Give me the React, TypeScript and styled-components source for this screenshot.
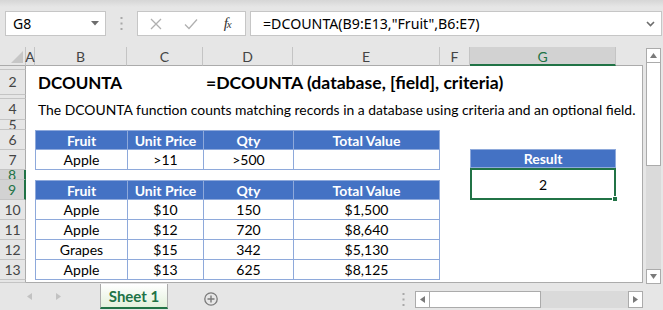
import styled, { createGlobalStyle } from "styled-components";

const Colors = {
  chrome: "#e6e6e6",
  chromeTop: "#d6d6d6",
  white: "#ffffff",
  boxLine: "#c6c6c6",
  hdrLine: "#c4c4c4",
  hdrLineDark: "#ababab",
  hdrText: "#444444",
  selHdr: "#d2d2d2",
  green: "#217346",
  blue: "#4472c4",
  blueLine: "#8ea9db",
  icon: "#7a7a7a",
  iconLight: "#b0b0b0",
  track: "#dadada",
};

const cellFont = `Lato, "Liberation Sans", sans-serif`;
const uiFont = `"Noto Sans", "Open Sans", sans-serif`;

const COLS = [26, 9, 92, 76, 90, 147, 30, 146, 27];
const ROWS = [19, 4, 25, 4, 21, 10, 20, 20, 10, 20, 20, 20, 20, 20, 3];
const LETTERS = ["", "A", "B", "C", "D", "E", "F", "G", ""];
const SELECTED_ROWS = [8, 9];

const criteria = [["Apple", ">11", ">500", ""]];
const records = [
  ["Apple", "$10", "150", "$1,500"],
  ["Apple", "$12", "720", "$8,640"],
  ["Grapes", "$15", "342", "$5,130"],
  ["Apple", "$13", "625", "$8,125"],
];
const heads = ["Fruit", "Unit Price", "Qty", "Total Value"];

const GlobalStyle = createGlobalStyle`
  html, body { margin: 0; padding: 0; background: ${Colors.chrome}; }
  body { font-family: ${cellFont}; overflow: hidden; }
  * { box-sizing: border-box; }
`;

const Window = styled.div`
  width: 663px;
  height: 310px;
  display: flex;
  flex-direction: column;
  background: ${Colors.chrome};
  overflow: hidden;
`;

/* ---------- formula bar ---------- */
const FormulaBar = styled.div`
  flex: none;
  height: 47px;
  display: flex;
  align-items: flex-start;
  padding: 11px 1px 0 5px;
  background: linear-gradient(${Colors.chromeTop}, ${Colors.chrome} 7px);
`;
const NameBox = styled.div`
  width: 101px;
  height: 25px;
  background: ${Colors.white};
  border: 1px solid ${Colors.boxLine};
  display: flex;
  align-items: center;
  justify-content: space-between;
  padding: 0 6px 0 7px;
  font: 14px ${uiFont};
  color: #000;
`;
const Grip = styled.div<{ $w: number; $h?: number; $top?: number }>`
  width: ${(p) => p.$w}px;
  height: ${(p) => p.$h ?? 25}px;
  margin-top: ${(p) => p.$top ?? 0}px;
  display: flex;
  align-items: center;
  justify-content: center;
`;
const EditButtons = styled.div`
  width: 109px;
  height: 25px;
  background: ${Colors.white};
  border: 1px solid ${Colors.boxLine};
  display: grid;
  grid-template-columns: repeat(3, 1fr);
  align-items: center;
  justify-items: center;
`;
const Fx = styled.span`
  font: italic 15px "Liberation Serif", serif;
  color: #333;
  letter-spacing: -1px;
  & small {
    font-size: 11px;
  }
`;
const FormulaInput = styled.div`
  flex: 1;
  margin-left: 4px;
  height: 25px;
  background: ${Colors.white};
  border: 1px solid ${Colors.boxLine};
  display: flex;
  align-items: center;
  justify-content: space-between;
  padding: 0 6px 0 12px;
  font: 14.2px ${uiFont};
  color: #000;
`;

/* ---------- sheet ---------- */
const Body = styled.div`
  flex: none;
  height: 236px;
  display: flex;
`;
const Sheet = styled.div`
  width: 643px;
  display: grid;
  grid-template-columns: ${COLS.map((c) => c + "px").join(" ")};
  grid-template-rows: ${ROWS.map((r) => r + "px").join(" ")};
`;
const Canvas = styled.div`
  grid-column: 2 / -1;
  grid-row: 2 / -1;
  background: ${Colors.white};
  border-right: 1px solid ${Colors.hdrLineDark};
  border-bottom: 1px solid ${Colors.hdrLineDark};
`;
const ColHead = styled.div<{ $col: number; $sel?: boolean; $last?: boolean }>`
  grid-column: ${(p) => p.$col};
  grid-row: 1;
  position: relative;
  display: flex;
  align-items: center;
  justify-content: center;
  font: 14px ${cellFont};
  color: ${(p) => (p.$sel ? Colors.green : Colors.hdrText)};
  background: ${(p) => (p.$sel ? Colors.selHdr : Colors.chrome)};
  border-right: ${(p) => (p.$last ? "none" : `1px solid ${Colors.hdrLine}`)};
  border-bottom: ${(p) =>
    p.$sel ? `2px solid ${Colors.green}` : `1px solid ${Colors.hdrLineDark}`};
  padding-top: ${(p) => (p.$sel ? "1px" : "0")};
`;
const CornerMark = styled.span`
  position: absolute;
  right: 2px;
  bottom: 2px;
  width: 0;
  height: 0;
  border-left: 12px solid transparent;
  border-bottom: 12px solid #c6c6c6;
`;
const RowHead = styled.div<{ $row: number; $sel?: boolean }>`
  grid-column: 1;
  grid-row: ${(p) => p.$row + 1};
  overflow: hidden;
  display: flex;
  align-items: center;
  justify-content: center;
  font: 14px ${cellFont};
  line-height: 1;
  color: ${(p) => (p.$sel ? Colors.green : Colors.hdrText)};
  background: ${(p) => (p.$sel ? Colors.selHdr : Colors.chrome)};
  border-right: ${(p) =>
    p.$sel ? `2px solid ${Colors.green}` : `1px solid ${Colors.hdrLineDark}`};
  border-bottom: 1px solid ${Colors.hdrLine};
`;
const TextCell = styled.div<{ $col: number; $row: number; $bold?: boolean; $size: number }>`
  grid-column: ${(p) => p.$col} / span 6;
  grid-row: ${(p) => p.$row + 1};
  display: flex;
  align-items: center;
  padding-left: 3px;
  white-space: nowrap;
  font-family: ${cellFont};
  font-size: ${(p) => p.$size}px;
  font-weight: ${(p) => (p.$bold ? 700 : 400)};
  color: #000;
`;
const DataTable = styled.div<{ $row: number; $rows: number }>`
  grid-column: 3 / span 4;
  grid-row: ${(p) => p.$row + 1} / span ${(p) => p.$rows};
  display: grid;
  grid-template-columns: 91px 75px 89px 145px;
  grid-template-rows: 18px;
  grid-auto-rows: 19px;
  gap: 1px;
  padding: 1px;
  background: ${Colors.blueLine};
  align-self: start;
`;
const HeadCell = styled.div`
  background: ${Colors.blue};
  color: ${Colors.white};
  font: 700 14px ${cellFont};
  display: flex;
  align-items: center;
  justify-content: center;
`;
const DataCell = styled.div`
  background: ${Colors.white};
  color: #000;
  font: 14px ${cellFont};
  display: flex;
  align-items: center;
  justify-content: center;
`;
const ResultHead = styled(HeadCell)`
  grid-column: 8;
  grid-row: 8;
  margin: -1px 0 2px;
  border: 1px solid ${Colors.blueLine};
`;
const ResultValue = styled.div`
  grid-column: 8;
  grid-row: 9 / span 2;
  margin-top: -2px;
  position: relative;
  border: 2px solid ${Colors.green};
  display: flex;
  align-items: center;
  justify-content: center;
  font: 14px ${cellFont};
  color: #000;
`;
const FillHandle = styled.span`
  position: absolute;
  right: -4px;
  bottom: -4px;
  width: 6px;
  height: 6px;
  background: ${Colors.green};
  border: 1px solid ${Colors.white};
`;

/* ---------- scroll bars ---------- */
const VScroll = styled.div`
  width: 15px;
  margin: 1px 0 -1px 3px;
  display: flex;
  flex-direction: column;
  background: ${Colors.track};
`;
const ScrollButton = styled.div`
  flex: none;
  width: 15px;
  height: 15px;
  background: ${Colors.white};
  border: 1px solid ${Colors.hdrLineDark};
  display: flex;
  align-items: center;
  justify-content: center;
`;
const VThumb = styled.div`
  flex: none;
  height: 103px;
  background: ${Colors.white};
  border: 1px solid ${Colors.hdrLineDark};
  border-top: none;
`;
const Spacer = styled.div`
  flex: 1;
`;

/* ---------- tab bar ---------- */
const TabBar = styled.div`
  flex: none;
  height: 27px;
  display: flex;
  align-items: flex-start;
`;
const TabNav = styled.div`
  width: 100px;
  height: 27px;
  display: flex;
  align-items: center;
  padding-left: 26px;
  gap: 22px;
`;
const SheetTab = styled.div`
  width: 68px;
  height: 25px;
  margin-top: 1px;
  background: linear-gradient(#ffffff, #e3f1dc);
  border-left: 1px solid ${Colors.hdrLineDark};
  border-right: 1px solid ${Colors.hdrLineDark};
  border-bottom: 2px solid ${Colors.green};
  display: flex;
  align-items: center;
  justify-content: center;
  font: 700 15px ${cellFont};
  color: ${Colors.green};
`;
const AddSheet = styled.div`
  margin: 7px 0 0 36px;
  width: 14px;
  height: 14px;
`;
const HScrollArea = styled.div`
  margin-left: auto;
  margin-right: 20px;
  display: flex;
  align-items: flex-start;
`;
const HScroll = styled.div`
  width: 228px;
  height: 17px;
  margin-top: 8px;
  display: flex;
  background: ${Colors.track};
`;
const HButton = styled(ScrollButton)`
  height: 17px;
`;
const HThumb = styled.div`
  width: 111px;
  background: ${Colors.white};
  border: 1px solid ${Colors.hdrLineDark};
  border-left: none;
`;

const Dots = () => (
  <svg width="3" height="13" viewBox="0 0 3 13">
    <rect x="0.5" y="0" width="2" height="2" fill="#a8a8a8" />
    <rect x="0.5" y="5.5" width="2" height="2" fill="#a8a8a8" />
    <rect x="0.5" y="11" width="2" height="2" fill="#a8a8a8" />
  </svg>
);

const Tri = ({ dir, color = Colors.icon, size = 7 }: { dir: "up" | "down" | "left" | "right"; color?: string; size?: number }) => {
  const pts = {
    up: "0,6 7,6 3.5,1",
    down: "0,1 7,1 3.5,6",
    left: "6,0 6,7 1,3.5",
    right: "1,0 1,7 6,3.5",
  }[dir];
  return (
    <svg width={size} height={size} viewBox="0 0 7 7">
      <polygon points={pts} fill={color} />
    </svg>
  );
};

// rows too short to show their number in the reference
const HIDDEN_LABELS = [1, 3, 14];

export default function App() {
  return (
    <Window>
      <GlobalStyle />
      <FormulaBar>
        <NameBox>
          G8
          <svg width="8" height="5" viewBox="0 0 8 5">
            <polygon points="0,0 8,0 4,4.5" fill="#6d6d6d" />
          </svg>
        </NameBox>
        <Grip $w={31}>
          <Dots />
        </Grip>
        <EditButtons>
          <svg width="12" height="12" viewBox="0 0 12 12">
            <path d="M1 1 L11 11 M11 1 L1 11" stroke={Colors.iconLight} strokeWidth="1.3" fill="none" />
          </svg>
          <svg width="14" height="12" viewBox="0 0 14 12">
            <path d="M1 6.5 L5 10.5 L13 1.5" stroke={Colors.iconLight} strokeWidth="1.3" fill="none" />
          </svg>
          <Fx>
            f<small>x</small>
          </Fx>
        </EditButtons>
        <FormulaInput>
          =DCOUNTA(B9:E13,"Fruit",B6:E7)
          <svg width="9" height="6" viewBox="0 0 9 6">
            <path d="M1 1 L4.5 4.5 L8 1" stroke="#6d6d6d" strokeWidth="1.6" fill="none" />
          </svg>
        </FormulaInput>
      </FormulaBar>

      <Body>
        <Sheet>
          <Canvas />
          {LETTERS.map((l, i) => (
            <ColHead key={i} $col={i + 1} $sel={l === "G"} $last={i === LETTERS.length - 1}>
              {l}
              {i === 0 && <CornerMark />}
            </ColHead>
          ))}
          {ROWS.slice(1).map((_, i) => (
            <RowHead key={i} $row={i + 1} $sel={SELECTED_ROWS.includes(i + 1)}>
              {HIDDEN_LABELS.includes(i + 1) ? null : i + 1}
            </RowHead>
          ))}

          <TextCell $col={3} $row={2} $bold $size={17}>
            DCOUNTA
          </TextCell>
          <TextCell $col={5} $row={2} $bold $size={17.6}>
            =DCOUNTA (database, [field], criteria)
          </TextCell>
          <TextCell $col={3} $row={4} $size={13.9}>
            The DCOUNTA function counts matching records in a database using criteria and an optional field.
          </TextCell>

          <DataTable $row={6} $rows={2}>
            {heads.map((h) => (
              <HeadCell key={h}>{h}</HeadCell>
            ))}
            {criteria.flat().map((v, i) => (
              <DataCell key={i}>{v}</DataCell>
            ))}
          </DataTable>

          <DataTable $row={9} $rows={5}>
            {heads.map((h) => (
              <HeadCell key={h}>{h}</HeadCell>
            ))}
            {records.flat().map((v, i) => (
              <DataCell key={i}>{v}</DataCell>
            ))}
          </DataTable>

          <ResultHead>Result</ResultHead>
          <ResultValue>
            2
            <FillHandle />
          </ResultValue>
        </Sheet>

        <VScroll>
          <ScrollButton>
            <Tri dir="up" />
          </ScrollButton>
          <VThumb />
          <Spacer />
          <ScrollButton>
            <Tri dir="down" />
          </ScrollButton>
        </VScroll>
      </Body>

      <TabBar>
        <TabNav>
          <Tri dir="left" color="#c2c2c2" />
          <Tri dir="right" color="#c2c2c2" />
        </TabNav>
        <SheetTab>Sheet 1</SheetTab>
        <AddSheet>
          <svg width="14" height="14" viewBox="0 0 14 14">
            <circle cx="7" cy="7" r="6.2" stroke="#7a7a7a" strokeWidth="1.3" fill="none" />
            <path d="M7 3.5 V10.5 M3.5 7 H10.5" stroke="#7a7a7a" strokeWidth="1.4" />
          </svg>
        </AddSheet>
        <HScrollArea>
          <Grip $w={24} $h={17} $top={8}>
            <Dots />
          </Grip>
          <HScroll>
            <HButton>
              <Tri dir="left" />
            </HButton>
            <HThumb />
            <Spacer />
            <HButton>
              <Tri dir="right" />
            </HButton>
          </HScroll>
        </HScrollArea>
      </TabBar>
    </Window>
  );
}
